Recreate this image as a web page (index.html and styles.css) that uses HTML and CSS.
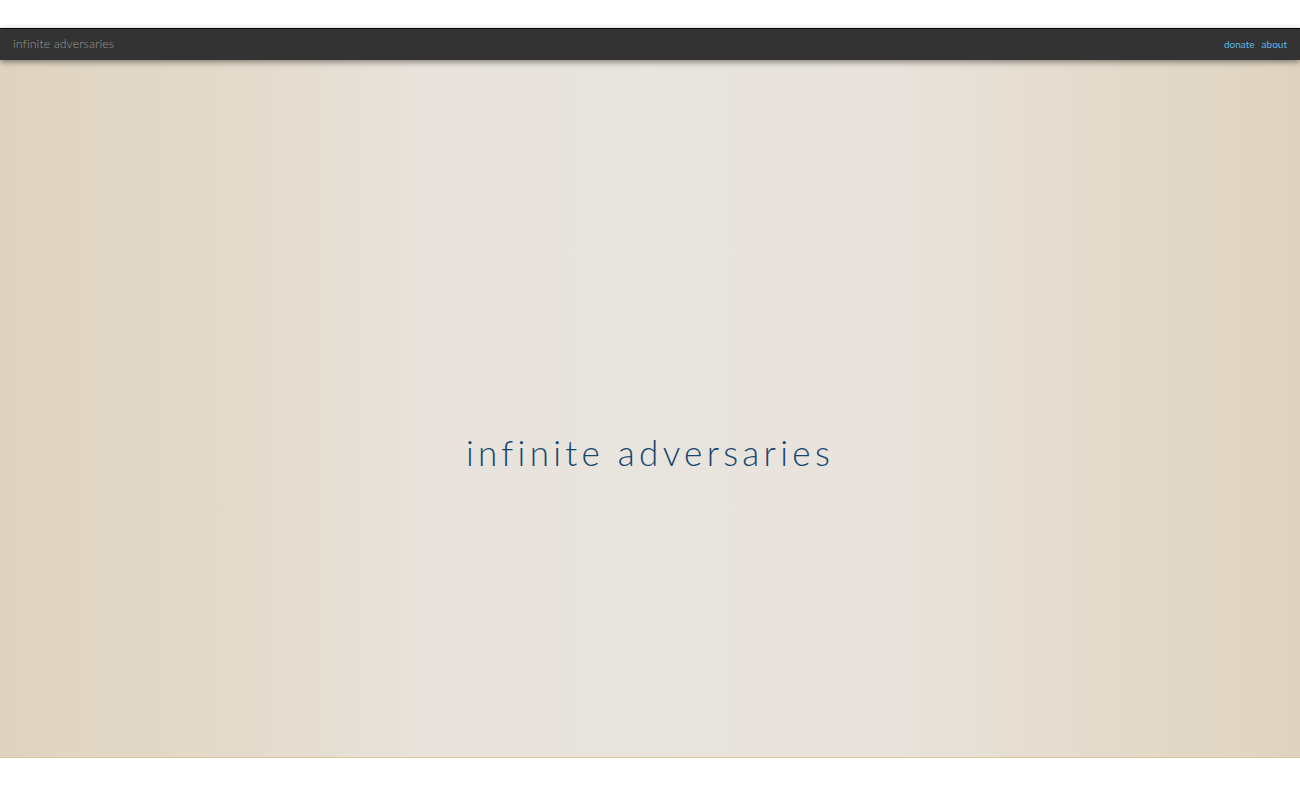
FILE: index.html
```
<!DOCTYPE html>
<html>
<head>
<meta charset="utf-8">
<link rel="stylesheet" href="styles.css">
</head>
<body>
<div class="page">
  <nav class="navbar">
    <a class="brand" href="#">infinite adversaries</a>
    <div class="links">
      <a href="#">donate</a>
      <a href="#">about</a>
    </div>
  </nav>
  <main class="hero">
    <h1 class="title">infinite adversaries</h1>
  </main>
</div>
</body>
</html>
```
FILE: styles.css
```
html, body {
  margin: 0;
  padding: 0;
  background: #ffffff;
}
body {
  font-family: Lato, "Open Sans", "Liberation Sans", sans-serif;
}
.page {
  padding-top: 28px;
  display: flex;
  flex-direction: column;
}
.navbar {
  height: 31px;
  border-top: 1px solid #0a0a0a;
  background: #333333;
  display: flex;
  align-items: center;
  justify-content: space-between;
  padding: 0 13px;
  box-shadow: 0 2px 6px rgba(0,0,0,0.45);
  position: relative;
  z-index: 1;
}
.brand {
  color: #9a9a9a;
  font-size: 12.3px;
  font-weight: 300;
  text-decoration: none;
  letter-spacing: 0.1px;
  margin-top: -2px;
}
.links {
  display: flex;
  gap: 7px;
  margin-top: -1px;
}
.links a {
  color: #5bb8e6;
  font-size: 10px;
  font-weight: 400;
  text-decoration: none;
}
.hero {
  height: 697px;
  border-bottom: 1px solid #dcc49e;
  background: linear-gradient(to right,
    #e0d4c0 0%,
    #e3d9c9 15%,
    #e6ded2 25%,
    #e8e3dc 33%,
    #e8e4de 50%,
    #e8e3dc 68%,
    #e6ded2 78%,
    #e3d9c9 88%,
    #e0d4c0 100%);
  display: flex;
  align-items: center;
  justify-content: center;
}
.title {
  margin: 0;
  margin-top: 86px;
  font-family: Lato, "Open Sans", sans-serif;
  font-weight: 300;
  font-size: 35px;
  letter-spacing: 4.3px;
  color: #164670;
}
```
